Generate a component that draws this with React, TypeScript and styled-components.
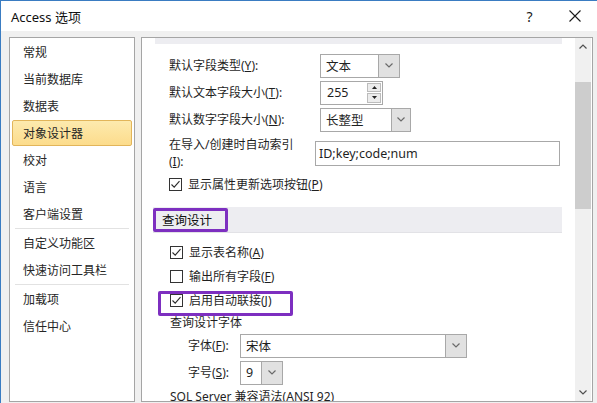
import React from "react";
import styled, { createGlobalStyle } from "styled-components";

const GlobalStyle = createGlobalStyle`
  html, body {
    margin: 0;
    padding: 0;
  }
  body {
    background: #f0f0f0;
    font-family: "Noto Sans", "Noto Sans CJK SC", sans-serif;
    color: #1f1f1f;
  }
`;

const navGroups: string[][] = [
  ["常规", "当前数据库", "数据表", "对象设计器", "校对", "语言", "客户端设置"],
  ["自定义功能区", "快速访问工具栏"],
  ["加载项", "信任中心"],
];

const Chevron: React.FC<{ up?: boolean; color?: string }> = ({ up, color = "#6a6a6a" }) => (
  <svg width="8" height="5" viewBox="0 0 8 5">
    <polyline
      points={up ? "0.5,4.5 4,1 7.5,4.5" : "0.5,0.5 4,4 7.5,0.5"}
      fill="none"
      stroke={color}
      strokeWidth="1.2"
    />
  </svg>
);

const Check: React.FC<{ checked?: boolean }> = ({ checked }) => (
  <CheckBox>
    {checked && (
      <svg width="11" height="11" viewBox="0 0 11 11">
        <polyline points="1.5,5.5 4.2,8.2 9.5,2.2" fill="none" stroke="#2b2b2b" strokeWidth="1.1" />
      </svg>
    )}
  </CheckBox>
);

const Combo: React.FC<{ value: string; width: number; button?: number }> = ({ value, width, button = 19 }) => (
  <ComboBox $width={width}>
    <ComboText>{value}</ComboText>
    <ComboButton $width={button}>
      <Chevron />
    </ComboButton>
  </ComboBox>
);

const App: React.FC = () => {
  return (
    <Window>
      <GlobalStyle />
      <TitleBar>
        <Title>Access 选项</Title>
        <TitleButton>?</TitleButton>
        <TitleButton>
          <svg width="12" height="12" viewBox="0 0 12 12">
            <path d="M0.5 0.5 L11.5 11.5 M11.5 0.5 L0.5 11.5" stroke="#1a1a1a" strokeWidth="1.1" />
          </svg>
        </TitleButton>
      </TitleBar>

      <Body>
        <NavPanel>
          {navGroups.map((group, gi) => (
            <React.Fragment key={gi}>
              {gi > 0 && <NavSeparator />}
              {group.map((item) => (
                <NavItem key={item} $active={item === "对象设计器"}>
                  {item}
                </NavItem>
              ))}
            </React.Fragment>
          ))}
        </NavPanel>

        <MainPanel>
          <Content>
            <TopBand />
            <FormGroup>
              <FieldRow>
                <Label>默认字段类型(<u>Y</u>):</Label>
                <Combo value="文本" width={80} button={20} />
              </FieldRow>
              <FieldRow>
                <Label>默认文本字段大小(<u>T</u>):</Label>
                <SpinBox>
                  <ComboText>255</ComboText>
                  <SpinButtons>
                    <SpinHalf>
                      <svg width="5" height="3" viewBox="0 0 5 3">
                        <polygon points="0,3 2.5,0 5,3" fill="#222" />
                      </svg>
                    </SpinHalf>
                    <SpinHalf>
                      <svg width="5" height="3" viewBox="0 0 5 3">
                        <polygon points="0,0 2.5,3 5,0" fill="#222" />
                      </svg>
                    </SpinHalf>
                  </SpinButtons>
                </SpinBox>
              </FieldRow>
              <FieldRow>
                <Label>默认数字字段大小(<u>N</u>):</Label>
                <Combo value="长整型" width={91} button={18} />
              </FieldRow>
              <IndexRow>
                <Label $width={146}>
                  在导入/创建时自动索引
                  <br />(<u>I</u>):
                </Label>
                <TextInput>ID;key;code;num</TextInput>
              </IndexRow>
              <CheckRow $top={2} $indent={0}>
                <Check checked />
                <CheckLabel>显示属性更新选项按钮(<u>P</u>)</CheckLabel>
              </CheckRow>
            </FormGroup>

            <SectionHeader>
              查询设计
              <Marker $left={0} $top={1} $width={75} $height={24} />
            </SectionHeader>

            <CheckRow $top={7}>
              <Check checked />
              <CheckLabel>显示表名称(<u>A</u>)</CheckLabel>
            </CheckRow>
            <CheckRow>
              <Check />
              <CheckLabel>输出所有字段(<u>F</u>)</CheckLabel>
            </CheckRow>
            <CheckRow>
              <Check checked />
              <CheckLabel>启用自动联接(<u>J</u>)</CheckLabel>
              <Marker $left={16} $top={3} $width={135} $height={25} />
            </CheckRow>

            <PlainRow>查询设计字体</PlainRow>
            <FontRow>
              <Label $width={52}>字体(<u>F</u>):</Label>
              <Combo value="宋体" width={227} button={20} />
            </FontRow>
            <FontRow>
              <Label $width={52}>字号(<u>S</u>):</Label>
              <Combo value="9" width={43} button={20} />
            </FontRow>
            <PlainRow>SQL Server 兼容语法(ANSI 92)</PlainRow>
          </Content>

          <Scrollbar>
            <ScrollArrow>
              <Chevron up color="#505050" />
            </ScrollArrow>
            <ScrollTrack>
              <ScrollThumb />
            </ScrollTrack>
            <ScrollArrow>
              <Chevron color="#505050" />
            </ScrollArrow>
          </Scrollbar>
        </MainPanel>
      </Body>
    </Window>
  );
};

export default App;

/* Styled */

const Window = styled.div`
  width: 597px;
  height: 403px;
  box-sizing: border-box;
  display: flex;
  flex-direction: column;
  border-top: 1px solid #3a7cc2;
  border-left: 1px solid #3a7cc2;
  background: #f0f0f0;
  overflow: hidden;
`;

const TitleBar = styled.div`
  height: 30px;
  flex-shrink: 0;
  display: flex;
  align-items: center;
  background: #ffffff;
  padding-left: 10px;
`;

const Title = styled.div`
  flex: 1;
  font-size: 13px;
  color: #111;
`;

const TitleButton = styled.div`
  width: 45px;
  height: 30px;
  display: flex;
  align-items: center;
  justify-content: center;
  font-size: 14px;
  color: #1a1a1a;
`;

const Body = styled.div`
  flex: 1;
  min-height: 0;
  display: flex;
  gap: 6px;
  padding: 6px 4px 1px 8px;
`;

const NavPanel = styled.div`
  width: 126px;
  flex-shrink: 0;
  box-sizing: border-box;
  background: #ffffff;
  border: 1px solid #a5a5a5;
`;

const NavItem = styled.div<{ $active?: boolean }>`
  height: 26px;
  box-sizing: border-box;
  margin: 1px 2px;
  padding-left: 10px;
  display: flex;
  align-items: center;
  font-size: 12px;
  color: #262626;
  border-radius: 2px;
  border: 1px solid ${(p) => (p.$active ? "#e2b55a" : "transparent")};
  background: ${(p) => (p.$active ? "linear-gradient(#fdeaae, #fcdc8c)" : "transparent")};
`;

const NavSeparator = styled.div`
  height: 1px;
  margin: 0 5px;
  background: #e2e2e2;
`;

const MainPanel = styled.div`
  flex: 1;
  display: flex;
  box-sizing: border-box;
  background: #ffffff;
  border: 1px solid #a5a5a5;
  overflow: hidden;
`;

const Content = styled.div`
  flex: 1;
  min-width: 0;
  overflow: hidden;
  font-size: 12px;
  color: #1f1f1f;
`;

const TopBand = styled.div`
  height: 6px;
  margin: 0 13px;
  background: #ededf1;
`;

const FormGroup = styled.div`
  margin-top: 8px;
  padding-left: 27px;
`;

const FieldRow = styled.div`
  height: 27px;
  display: flex;
  align-items: center;
`;

const Label = styled.div<{ $width?: number }>`
  width: ${(p) => p.$width ?? 151}px;
  flex-shrink: 0;
  line-height: 17px;
  white-space: nowrap;
`;

const ComboBox = styled.div<{ $width: number }>`
  width: ${(p) => p.$width}px;
  height: 24px;
  box-sizing: border-box;
  display: flex;
  border: 1px solid #a8a8a8;
  background: #ffffff;
`;

const ComboText = styled.div`
  flex: 1;
  display: flex;
  align-items: center;
  padding-left: 5px;
  font-size: 12.5px;
`;

const ComboButton = styled.div<{ $width: number }>`
  width: ${(p) => p.$width}px;
  display: flex;
  align-items: center;
  justify-content: center;
  background: #e1e1e1;
  border-left: 1px solid #a8a8a8;
`;

const SpinBox = styled.div`
  width: 63px;
  height: 24px;
  box-sizing: border-box;
  display: flex;
  border: 1px solid #a8a8a8;
  padding: 1px;
`;

const SpinButtons = styled.div`
  width: 14px;
  display: flex;
  flex-direction: column;
  gap: 1px;
`;

const SpinHalf = styled.div`
  flex: 1;
  display: flex;
  align-items: center;
  justify-content: center;
  background: #ececec;
  border: 1px solid #bcbcbc;
`;

const IndexRow = styled.div`
  height: 34px;
  margin-top: 3px;
  display: flex;
  align-items: center;
`;

const TextInput = styled.div`
  width: 245px;
  height: 25px;
  box-sizing: border-box;
  display: flex;
  align-items: center;
  padding-left: 3px;
  border: 1px solid #a8a8a8;
  font-size: 12.5px;
`;

const CheckRow = styled.div<{ $top?: number; $indent?: number }>`
  position: relative;
  height: 24px;
  margin-top: ${(p) => p.$top ?? 0}px;
  padding-left: ${(p) => p.$indent ?? 28}px;
  display: flex;
  align-items: center;
`;

const CheckBox = styled.div`
  width: 13px;
  height: 13px;
  box-sizing: border-box;
  border: 1px solid #333333;
  background: #ffffff;
  display: flex;
  align-items: center;
  justify-content: center;
`;

const CheckLabel = styled.div`
  margin-left: 6px;
`;

const SectionHeader = styled.div`
  position: relative;
  height: 26px;
  margin: 11px 13px 0 11px;
  padding-left: 9px;
  display: flex;
  align-items: center;
  background: #ededf1;
  border-bottom: 1px solid #e2e2e6;
  box-sizing: border-box;
  font-size: 12.5px;
  color: #111;
`;

const Marker = styled.div<{ $left: number; $top: number; $width: number; $height: number }>`
  position: absolute;
  left: ${(p) => p.$left}px;
  top: ${(p) => p.$top}px;
  width: ${(p) => p.$width}px;
  height: ${(p) => p.$height}px;
  box-sizing: border-box;
  border: 3px solid #7d2fc0;
  border-radius: 2px;
`;

const PlainRow = styled.div`
  height: 20px;
  padding-left: 28px;
  display: flex;
  align-items: center;
  white-space: nowrap;
`;

const FontRow = styled.div`
  height: 27px;
  padding-left: 46px;
  display: flex;
  align-items: center;
`;

const Scrollbar = styled.div`
  width: 16px;
  margin-right: 1px;
  flex-shrink: 0;
  display: flex;
  flex-direction: column;
  background: #f0f0f0;
`;

const ScrollArrow = styled.div`
  height: 17px;
  display: flex;
  align-items: center;
  justify-content: center;
`;

const ScrollTrack = styled.div`
  flex: 1;
`;

const ScrollThumb = styled.div`
  margin-top: 27px;
  height: 127px;
  background: #cdcdcd;
`;
